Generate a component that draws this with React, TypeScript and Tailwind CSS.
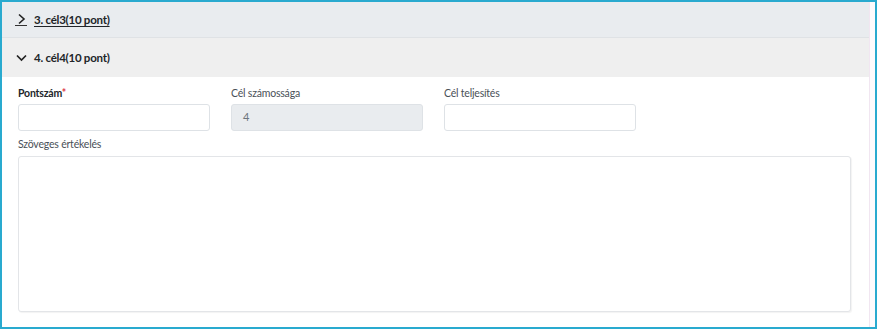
import React from "react";

const font = { fontFamily: 'Lato, "Open Sans", Arial, sans-serif' };

export default function App() {
  return (
    <div className="w-[877px] h-[329px] bg-[#29aacf] p-[2px] pr-[2px]" style={font}>
      <div className="w-full h-full bg-white flex">
        <div className="flex-1 flex flex-col min-w-0">
          <div className="h-[36px] bg-[#e9ecef] border-b border-[#dfe2e5] flex items-center pl-[13px] text-[#212529]">
            <span className="flex items-end w-[12px] h-[13px] border-b border-[#333] justify-center">
              <svg width="9" height="12" viewBox="0 0 9 12" fill="none" stroke="#222" strokeWidth="1.6">
                <path d="M2 1.5 L7 6 L2 10.5" />
              </svg>
            </span>
            <span className="ml-[7px] text-[11.5px] tracking-[-0.25px] font-bold underline underline-offset-2 leading-none">3. cél3(10 pont)</span>
          </div>
          <div className="h-[39px] bg-[#efefef] flex items-center pl-[14px] text-[#212529]">
            <svg width="11" height="8" viewBox="0 0 11 8" fill="none" stroke="#222" strokeWidth="1.7">
              <path d="M1 1.5 L5.5 6 L10 1.5" />
            </svg>
            <span className="ml-[7px] text-[11.5px] tracking-[-0.25px] font-bold leading-none">4. cél4(10 pont)</span>
          </div>
          <div className="flex-1 pl-[16px] pr-[18px] pt-[8px] flex flex-col">
            <div className="flex gap-[21px]">
              <div className="w-[192px] flex flex-col">
                <label className="text-[10.5px] tracking-[-0.2px] font-bold text-[#212529] h-[16px] leading-[16px]">
                  Pontszám<span className="text-[#dc3545]">*</span>
                </label>
                <div className="mt-[3px] h-[27px] border border-[#dee2e6] rounded-[3px] bg-white" />
              </div>
              <div className="w-[192px] flex flex-col">
                <label className="text-[10.5px] tracking-[-0.2px] text-[#495057] h-[16px] leading-[16px]">Cél számossága</label>
                <div className="mt-[3px] h-[27px] border border-[#dee2e6] rounded-[3px] bg-[#e9ecef] flex items-center pl-[11px] text-[11px] text-[#6c757d]">4</div>
              </div>
              <div className="w-[192px] flex flex-col">
                <label className="text-[10.5px] tracking-[-0.2px] text-[#495057] h-[16px] leading-[16px]">Cél teljesítés</label>
                <div className="mt-[3px] h-[27px] border border-[#dee2e6] rounded-[3px] bg-white" />
              </div>
            </div>
            <label className="mt-[5px] text-[10.5px] tracking-[-0.2px] text-[#495057] h-[16px] leading-[16px]">Szöveges értékelés</label>
            <div className="mt-[4px] h-[156px] border border-[#e3e5e8] rounded-[3px] bg-white shadow-[1px_1px_1px_rgba(0,0,0,0.05)]" />
          </div>
        </div>
        <div className="w-[6px] border-l border-[#f1e6f1] bg-[#fdfbfd]" />
      </div>
    </div>
  );
}
